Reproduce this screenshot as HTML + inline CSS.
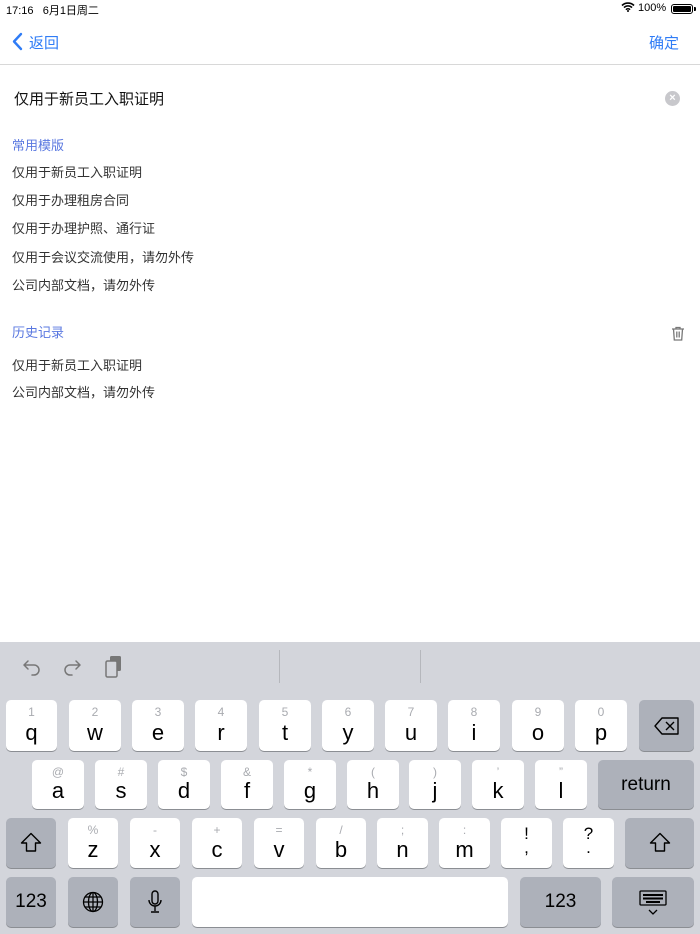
<!DOCTYPE html>
<html><head><meta charset="utf-8"><style>
*{margin:0;padding:0;box-sizing:border-box}
body{width:700px;height:934px;background:#fff;position:relative;overflow:hidden;font-family:"Liberation Sans","Noto Sans CJK SC",sans-serif;color:#222}
.a{position:absolute;white-space:nowrap}
.item{position:absolute;left:12px;font-size:13px;color:#333;line-height:16px}
.hd{position:absolute;left:12px;font-size:13px;color:#5a78e0;line-height:16px}
.kb{position:absolute;left:0;top:642px;width:700px;height:292px;background:#d3d5db}
.k{position:absolute;background:#fff;border-radius:5px;box-shadow:0 1px 0 #8b8e93;text-align:center;color:#000;font-family:"Liberation Sans",sans-serif}
.k .s{position:absolute;left:0;right:0;top:5px;font-size:12px;color:#a9abb0}
.k .m{position:absolute;left:0;right:0;bottom:6px;font-size:22px;line-height:24px}
.g{background:#adb1ba}
.g .c{position:absolute;left:0;right:0;top:50%;transform:translateY(-50%);font-size:19px}
</style></head><body>
<div class="a" style="left:6px;top:2px;font-size:11px;color:#000">17:16&nbsp;&nbsp; 6月1日周二</div>
<div class="a" style="left:621px;top:2px;font-size:11px;color:#000">
<svg width="14" height="10" viewBox="0 0 14 10" style="vertical-align:-1px"><path d="M1 3.5a8.5 8.5 0 0 1 12 0M3 5.6a5.5 5.5 0 0 1 8 0M5 7.7a2.6 2.6 0 0 1 4 0" stroke="#000" stroke-width="1.6" fill="none"/><circle cx="7" cy="9" r="1" fill="#000"/></svg> 100%</div>
<div class="a" style="left:671px;top:4px;width:22px;height:10px;border:1px solid #000;border-radius:3px;padding:1px"><div style="width:100%;height:100%;background:#000;border-radius:1px"></div></div>
<div class="a" style="left:694px;top:7px;width:2px;height:4px;background:#000;border-radius:0 1px 1px 0"></div>

<svg class="a" style="left:11px;top:32px" width="12" height="19" viewBox="0 0 12 19"><path d="M10 2 L3 9.5 L10 17" stroke="#2f7cf6" stroke-width="2.4" fill="none" stroke-linecap="round" stroke-linejoin="round"/></svg>
<div class="a" style="left:29px;top:32px;font-size:15px;color:#2f7cf6">返回</div>
<div class="a" style="left:649px;top:32px;font-size:15px;color:#2f7cf6">确定</div>
<div class="a" style="left:0;top:64px;width:700px;height:1px;background:#d8d8d8"></div>

<div class="a" style="left:14px;top:88px;font-size:15px;color:#111">仅用于新员工入职证明</div>
<div class="a" style="left:665px;top:91px;width:15px;height:15px;border-radius:50%;background:#c8c8cc;color:#fff;font-size:11px;line-height:15px;text-align:center;font-weight:bold">×</div>

<div class="hd" style="top:138px">常用模版</div>
<div class="item" style="top:165px">仅用于新员工入职证明</div>
<div class="item" style="top:193px">仅用于办理租房合同</div>
<div class="item" style="top:221px">仅用于办理护照、通行证</div>
<div class="item" style="top:250px">仅用于会议交流使用，请勿外传</div>
<div class="item" style="top:278px">公司内部文档，请勿外传</div>
<div class="hd" style="top:325px">历史记录</div>
<svg class="a" style="left:671px;top:326px" width="14" height="15" viewBox="0 0 14 15"><path d="M1 3h12M5 3V1.5h4V3M2.5 3l.8 11h7.4l.8-11M5.8 5.5v6M8.2 5.5v6" stroke="#777" stroke-width="1.3" fill="none"/></svg>
<div class="item" style="top:358px">仅用于新员工入职证明</div>
<div class="item" style="top:385px">公司内部文档，请勿外传</div>

<div class="kb"></div>
<svg class="a" style="left:22px;top:657px" width="20" height="20" viewBox="0 0 20 20"><path d="M6 4L2 8l4 4M2 8h10a5 5 0 0 1 0 10h-2" stroke="#777" stroke-width="1.5" fill="none" stroke-linecap="round" stroke-linejoin="round"/></svg>
<svg class="a" style="left:62px;top:657px" width="20" height="20" viewBox="0 0 20 20"><path d="M14 4l4 4-4 4M18 8H8a5 5 0 0 0 0 10h2" stroke="#777" stroke-width="1.5" fill="none" stroke-linecap="round" stroke-linejoin="round"/></svg>
<svg class="a" style="left:104px;top:655px" width="20" height="24" viewBox="0 0 20 24"><rect x="6" y="1" width="11" height="15" rx="1.5" fill="#777"/><rect x="2" y="6" width="11" height="16" rx="1.5" fill="#d3d5db" stroke="#777" stroke-width="1.5"/></svg>
<div class="a" style="left:279px;top:650px;width:1px;height:33px;background:#b5b7bc"></div>
<div class="a" style="left:420px;top:650px;width:1px;height:33px;background:#b5b7bc"></div>

<!-- row1 -->
<div class="k" style="left:6px;top:700px;width:51px;height:51px"><div class="s">1</div><div class="m">q</div></div>
<div class="k" style="left:69px;top:700px;width:52px;height:51px"><div class="s">2</div><div class="m">w</div></div>
<div class="k" style="left:132px;top:700px;width:52px;height:51px"><div class="s">3</div><div class="m">e</div></div>
<div class="k" style="left:195px;top:700px;width:52px;height:51px"><div class="s">4</div><div class="m">r</div></div>
<div class="k" style="left:259px;top:700px;width:52px;height:51px"><div class="s">5</div><div class="m">t</div></div>
<div class="k" style="left:322px;top:700px;width:52px;height:51px"><div class="s">6</div><div class="m">y</div></div>
<div class="k" style="left:385px;top:700px;width:52px;height:51px"><div class="s">7</div><div class="m">u</div></div>
<div class="k" style="left:448px;top:700px;width:52px;height:51px"><div class="s">8</div><div class="m">i</div></div>
<div class="k" style="left:512px;top:700px;width:52px;height:51px"><div class="s">9</div><div class="m">o</div></div>
<div class="k" style="left:575px;top:700px;width:52px;height:51px"><div class="s">0</div><div class="m">p</div></div>
<div class="k g" style="left:639px;top:700px;width:55px;height:51px"><svg style="position:absolute;left:15px;top:17px" width="26" height="18" viewBox="0 0 26 18"><path d="M8 1h16v16H8L1 9z" stroke="#000" stroke-width="1.4" fill="none" stroke-linejoin="round"/><path d="M12 5l8 8M20 5l-8 8" stroke="#000" stroke-width="1.4"/></svg></div>
<!-- row2 -->
<div class="k" style="left:32px;top:760px;width:52px;height:49px"><div class="s">@</div><div class="m">a</div></div>
<div class="k" style="left:95px;top:760px;width:52px;height:49px"><div class="s">#</div><div class="m">s</div></div>
<div class="k" style="left:158px;top:760px;width:52px;height:49px"><div class="s">$</div><div class="m">d</div></div>
<div class="k" style="left:221px;top:760px;width:52px;height:49px"><div class="s">&amp;</div><div class="m">f</div></div>
<div class="k" style="left:284px;top:760px;width:52px;height:49px"><div class="s">*</div><div class="m">g</div></div>
<div class="k" style="left:347px;top:760px;width:52px;height:49px"><div class="s">(</div><div class="m">h</div></div>
<div class="k" style="left:409px;top:760px;width:52px;height:49px"><div class="s">)</div><div class="m">j</div></div>
<div class="k" style="left:472px;top:760px;width:52px;height:49px"><div class="s">’</div><div class="m">k</div></div>
<div class="k" style="left:535px;top:760px;width:52px;height:49px"><div class="s">”</div><div class="m">l</div></div>
<div class="k g" style="left:598px;top:760px;width:96px;height:49px"><div class="c">return</div></div>
<!-- row3 -->
<div class="k g" style="left:6px;top:818px;width:50px;height:50px"><svg style="position:absolute;left:14px;top:14px" width="22" height="21" viewBox="0 0 22 21"><path d="M11 1.5L1.5 11H6.5v8h9v-8h5z" stroke="#000" stroke-width="1.4" fill="none" stroke-linejoin="round"/></svg></div>
<div class="k" style="left:68px;top:818px;width:50px;height:50px"><div class="s">%</div><div class="m">z</div></div>
<div class="k" style="left:130px;top:818px;width:50px;height:50px"><div class="s">-</div><div class="m">x</div></div>
<div class="k" style="left:192px;top:818px;width:50px;height:50px"><div class="s">+</div><div class="m">c</div></div>
<div class="k" style="left:254px;top:818px;width:50px;height:50px"><div class="s">=</div><div class="m">v</div></div>
<div class="k" style="left:316px;top:818px;width:50px;height:50px"><div class="s">/</div><div class="m">b</div></div>
<div class="k" style="left:377px;top:818px;width:51px;height:50px"><div class="s">;</div><div class="m">n</div></div>
<div class="k" style="left:439px;top:818px;width:51px;height:50px"><div class="s">:</div><div class="m">m</div></div>
<div class="k" style="left:501px;top:818px;width:51px;height:50px"><div class="s" style="color:#000;font-size:17px;top:6px">!</div><div class="m" style="font-size:17px;bottom:8px">,</div></div>
<div class="k" style="left:563px;top:818px;width:51px;height:50px"><div class="s" style="color:#000;font-size:17px;top:6px">?</div><div class="m" style="font-size:17px;bottom:8px">.</div></div>
<div class="k g" style="left:625px;top:818px;width:69px;height:50px"><svg style="position:absolute;left:24px;top:14px" width="22" height="21" viewBox="0 0 22 21"><path d="M11 1.5L1.5 11H6.5v8h9v-8h5z" stroke="#000" stroke-width="1.4" fill="none" stroke-linejoin="round"/></svg></div>
<!-- row4 -->
<div class="k g" style="left:6px;top:877px;width:50px;height:50px"><div class="c">123</div></div>
<div class="k g" style="left:68px;top:877px;width:50px;height:50px"><svg style="position:absolute;left:14px;top:14px" width="22" height="22" viewBox="0 0 22 22"><g stroke="#000" stroke-width="1.3" fill="none"><circle cx="11" cy="11" r="9.5"/><ellipse cx="11" cy="11" rx="4.5" ry="9.5"/><path d="M11 1.5v19M1.5 11h19M3 6h16M3 16h16"/></g></svg></div>
<div class="k g" style="left:130px;top:877px;width:50px;height:50px"><svg style="position:absolute;left:17px;top:13px" width="16" height="24" viewBox="0 0 16 24"><g stroke="#000" stroke-width="1.4" fill="none"><rect x="5" y="1" width="6" height="13" rx="3"/><path d="M2 10a6 6 0 0 0 12 0M8 16v5M4 22h8"/></g></svg></div>
<div class="k" style="left:192px;top:877px;width:316px;height:50px"></div>
<div class="k g" style="left:520px;top:877px;width:81px;height:50px"><div class="c">123</div></div>
<div class="k g" style="left:612px;top:877px;width:82px;height:50px"><svg style="position:absolute;left:27px;top:13px" width="28" height="26" viewBox="0 0 28 26"><rect x="1" y="1" width="26" height="14" rx="1" stroke="#000" stroke-width="1.3" fill="none"/><g fill="#000"><rect x="4" y="4" width="20" height="2"/><rect x="4" y="7.5" width="20" height="2"/><rect x="7" y="11" width="14" height="2"/></g><path d="M10 20l4 4 4-4" stroke="#000" stroke-width="1.3" fill="none"/></svg></div>
</body></html>
